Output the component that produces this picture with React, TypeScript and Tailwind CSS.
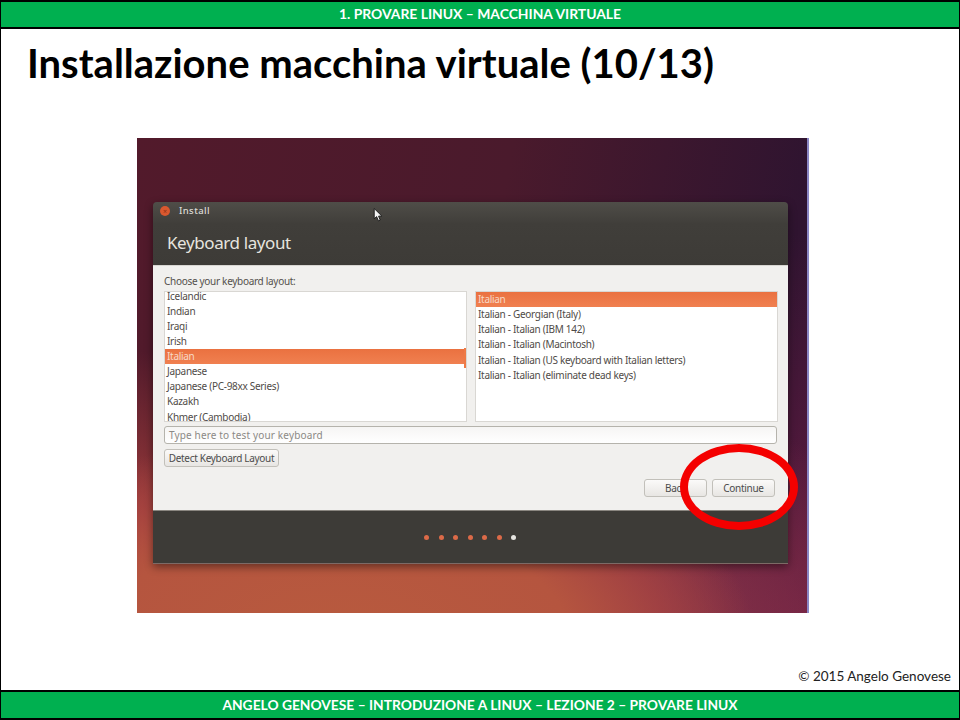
import React from 'react';

const layouts = ['Icelandic', 'Indian', 'Iraqi', 'Irish', 'Italian', 'Japanese', 'Japanese (PC-98xx Series)', 'Kazakh', 'Khmer (Cambodia)'];
const variants = [
  'Italian',
  'Italian - Georgian (Italy)',
  'Italian - Italian (IBM 142)',
  'Italian - Italian (Macintosh)',
  'Italian - Italian (US keyboard with Italian letters)',
  'Italian - Italian (eliminate dead keys)',
];

function Row({ label, selected }: { label: string; selected: boolean }) {
  return (
    <div className={`h-[15.13px] pl-[2px] leading-[15px] whitespace-nowrap ${selected ? 'bg-gradient-to-b from-[#ea7140] to-[#f08050] text-[#f8d9c6]' : 'text-[#4f4b47]'}`}>
      {label}
    </div>
  );
}

function GtkButton({ className, children }: { className: string; children: React.ReactNode }) {
  return (
    <div className={`h-[18px] flex items-center justify-center rounded-[3px] border border-[#c2c0ba] bg-gradient-to-b from-[#fbfaf9] to-[#e8e6e3] text-[10px] tracking-[-0.3px] text-[#4c4c4c] ${className}`}>
      {children}
    </div>
  );
}

export default function App() {
  return (
    <div className="w-[960px] h-[720px] bg-white flex flex-col border-x border-black font-['Lato',sans-serif] overflow-hidden relative">
      <header className="h-[29px] shrink-0 bg-[#00b050] border-y-2 border-black flex items-center justify-center text-white font-bold text-[13.9px]">
        1. PROVARE LINUX – MACCHINA VIRTUALE
      </header>

      <h1 className="pl-[26px] pt-[10px] h-[109px] text-[40px] leading-[48px] font-bold text-black whitespace-nowrap">
        Installazione macchina virtuale (10/13)
      </h1>

      <div className="ml-[136px] w-[672px] h-[475px] shrink-0 relative border-r-2 border-[#8a86c4] pl-[16px] pt-[64px] font-['Noto_Sans',sans-serif] bg-[radial-gradient(ellipse_62%_42%_at_30%_104%,#b85a3e_0%,#b5553f_55%,rgba(170,70,65,0.7)_78%,rgba(150,55,60,0)_100%),radial-gradient(ellipse_40%_45%_at_0%_90%,#b0443f_0%,rgba(150,50,60,0)_100%),radial-gradient(ellipse_55%_55%_at_62%_105%,#a0404c_0%,rgba(140,45,70,0)_100%),radial-gradient(ellipse_60%_80%_at_100%_100%,#651c42_0%,rgba(100,30,70,0)_100%),linear-gradient(100deg,#521a2b_0%,#4a1a2c_50%,#2f1430_90%,#321433_100%)]">
        {/* installer window */}
        <div className="w-[635px] h-[362px] flex flex-col rounded-t-[4px] overflow-hidden shadow-[0_3px_8px_rgba(0,0,0,0.45)]">
          <div className="h-[63px] shrink-0 bg-[linear-gradient(#4f4d48_0%,#403e3a_35%,#3d3b37_100%)]">
            <div className="flex items-center pt-[3px] pl-[7px] h-[15px]">
              <div className="w-[10px] h-[10px] rounded-full bg-[#d9582f] flex items-center justify-center text-[7px] leading-none text-[#8a2f14]">×</div>
              <span className="ml-[9px] text-[9.5px] font-medium text-[#dcdad5] tracking-[0.4px]">Install</span>
            </div>
            <div className="pl-[14px] pt-[14px] text-[17px] leading-[24px] tracking-[-0.4px] text-[#e6e4df]">Keyboard layout</div>
          </div>

          <div className="h-[245px] shrink-0 bg-[#f1f0ee] flex flex-col pl-[11px] border-t border-[#d8d6d2]">
            <div className="text-[10px] leading-[14px] pt-[8px] h-[25px] tracking-[-0.3px] text-[#54504c]">Choose your keyboard layout:</div>
            <div className="flex gap-[8px] text-[10px] tracking-[-0.3px]">
              <div className="w-[303px] h-[131px] bg-white border border-[#d9d7d3] overflow-hidden relative">
                <div className="-mt-[3.5px]">
                  {layouts.map((name) => (
                    <Row key={name} label={name} selected={name === 'Italian'} />
                  ))}
                </div>
                <div className="absolute right-0 top-[56px] w-[2px] h-[20px] bg-[#ee7a46]" />
              </div>
              <div className="w-[303px] h-[131px] bg-white border border-[#d9d7d3] overflow-hidden">
                {variants.map((name, i) => (
                  <Row key={name} label={name} selected={i === 0} />
                ))}
              </div>
            </div>
            <div className="mt-[4px] w-[613px] h-[18px] rounded-[3px] border border-[#b5b3ac] bg-gradient-to-b from-[#f6f5f4] to-white pl-[4px] text-[10px] leading-[16px] tracking-[0.15px] text-[#8b8985]">
              Type here to test your keyboard
            </div>
            <GtkButton className="mt-[5px] w-[115px]">Detect Keyboard Layout</GtkButton>
            <div className="mt-[12px] flex justify-end gap-[5px] pr-[13px]">
              <GtkButton className="w-[63px]">Back</GtkButton>
              <GtkButton className="w-[63px]">Continue</GtkButton>
            </div>
          </div>

          <div className="flex-1 bg-[#3d3b37] border-t border-[#8a8680] border-b border-b-[#7d6a66] flex items-center justify-center gap-[9.5px] pr-[1px]">
            {[0, 1, 2, 3, 4, 5, 6].map((i) => (
              <div key={i} className={`w-[5px] h-[5px] rounded-full ${i === 6 ? 'bg-[#e6e4e0]' : 'bg-[#dc6a48]'}`} />
            ))}
          </div>
        </div>

        {/* mouse pointer */}
        <svg className="absolute left-[236px] top-[70px]" width="10" height="14" viewBox="0 0 9 13">
          <path d="M1 0.5 L1 10 L3.2 8 L5 12 L6.6 11.3 L5 7.6 L8 7.4 Z" fill="#f4f4f4" stroke="#111" strokeWidth="0.8" />
        </svg>

        {/* red highlight round the Continue button */}
        <div className="absolute left-[543px] top-[306px] w-[118px] h-[86px] rounded-[50%] border-[8px] border-[#f40000]" />
      </div>

      <div className="mt-auto pr-[8px] text-right text-[13.5px] leading-[20px] text-[#222] pb-[4px]">© 2015 Angelo Genovese</div>

      <footer className="h-[30px] shrink-0 bg-[#00b050] border-y-2 border-black flex items-center justify-center text-white font-bold text-[13.8px]">
        ANGELO GENOVESE – INTRODUZIONE A LINUX – LEZIONE 2 – PROVARE LINUX
      </footer>
    </div>
  );
}
